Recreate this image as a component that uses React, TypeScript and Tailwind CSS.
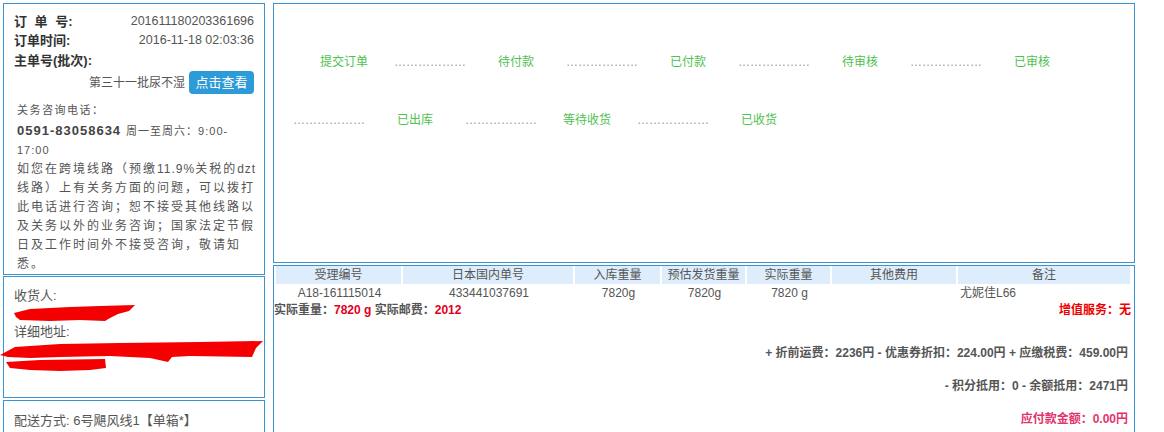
import React from 'react';

const steps: { label: string; dots?: boolean }[] = [
  { label: '提交订单' },
  { label: '', dots: true },
  { label: '待付款' },
  { label: '', dots: true },
  { label: '已付款' },
  { label: '', dots: true },
  { label: '待审核' },
  { label: '', dots: true },
  { label: '已审核' },
  { label: '', dots: true },
  { label: '已出库' },
  { label: '', dots: true },
  { label: '等待收货' },
  { label: '', dots: true },
  { label: '已收货' },
];

const cols = [
  { title: '受理编号', w: 'w-[127px]', value: 'A18-161115014', align: 'text-center' },
  { title: '日本国内单号', w: 'w-[172px]', value: '433441037691', align: 'text-center' },
  { title: '入库重量', w: 'w-[87px]', value: '7820g', align: 'text-center' },
  { title: '预估发货重量', w: 'w-[85px]', value: '7820g', align: 'text-center' },
  { title: '实际重量', w: 'w-[85px]', value: '7820 g', align: 'text-center' },
  { title: '其他费用', w: 'w-[126px]', value: '', align: 'text-center' },
  { title: '备注', w: 'w-[172px]', value: '尤妮佳L66', align: 'text-left pl-[2px]' },
];

const Box: React.FC<{ className?: string; children?: React.ReactNode }> = ({ className = '', children }) => (
  <div className={`border border-[#3a94d4] bg-white ${className}`}>{children}</div>
);

export default function App() {
  return (
    <div className="relative h-[432px] w-[1164px] overflow-hidden bg-white font-['Liberation_Sans','Noto_Sans_CJK_SC',sans-serif] text-[#555]">
      <div className="flex gap-[8px] p-[3px]">
        {/* left column */}
        <div className="flex w-[262px] shrink-0 flex-col">
          <Box className="h-[272px] px-[10px] pt-[8px]">
            <div className="flex items-center justify-between leading-[19px]">
              <span className="text-[13px] font-bold text-[#333] [word-spacing:4px]">订 单 号:</span>
              <span className="text-[12.5px]">201611180203361696</span>
            </div>
            <div className="flex items-center justify-between leading-[19px]">
              <span className="text-[13px] font-bold text-[#333]">订单时间:</span>
              <span className="text-[12.5px]">2016-11-18 02:03:36</span>
            </div>
            <div className="leading-[19px]">
              <span className="text-[13px] font-bold text-[#333]">主单号(批次):</span>
            </div>
            <div className="mt-[1px] flex h-[23px] items-center justify-end">
              <span className="mr-[4px] text-[12px]">第三十一批尿不湿</span>
              <button className="h-[23px] w-[65px] rounded-[4px] bg-[#2d9bd8] text-[13px] text-white">点击查看</button>
            </div>
            <div className="mt-[7px] whitespace-nowrap pl-[3px] leading-[19px] text-[#555]">
              <div className="text-[11px] tracking-[1.5px]">关务咨询电话：</div>
              <div>
                <span className="text-[13px] font-bold tracking-[1px] text-[#444]">0591-83058634</span>
                <span className="ml-[5px] text-[11px] tracking-[1px]">周一至周六：9:00-</span>
              </div>
              <div className="text-[11px] tracking-[1px]">17:00</div>
              <div className="text-[12px] tracking-[2px]">
                如您在跨境线路（预缴<span className="tracking-[1px]">11.9%</span>关税的<span className="tracking-[1px]">dzt</span>
                <br />
                线路）上有关务方面的问题，可以拨打
                <br />
                此电话进行咨询；恕不接受其他线路以
                <br />
                及关务以外的业务咨询；国家法定节假
                <br />
                日及工作时间外不接受咨询，敬请知
                <br />
                悉。
              </div>
            </div>
          </Box>

          <Box className="mt-[1px] h-[122px] px-[10px] pt-[10px] text-[13px] leading-[18px]">
            <div>收货人:</div>
            <div className="h-[18px]" />
            <div>详细地址:</div>
            <div className="h-[36px]" />
          </Box>

          <Box className="mt-[2px] h-[100px] px-[10px] pt-[11px] text-[13px] leading-[18px]">
            配送方式: 6号飓风线1【单箱*】
          </Box>
        </div>

        {/* right column */}
        <div className="flex w-[862px] shrink-0 flex-col">
          <Box className="h-[260px]">
            <div className="flex flex-wrap content-start pl-[12px] pt-[29px]">
              {steps.map((s, i) => (
                <div
                  key={i}
                  className={`flex h-[58px] w-[86px] items-center justify-center ${i === 0 ? 'ml-[15px]' : ''}`}
                >
                  {s.dots ? (
                    <span className="text-[12px] text-[#999]">………………</span>
                  ) : (
                    <span className="text-[12px] text-[#4ec24e]">{s.label}</span>
                  )}
                </div>
              ))}
            </div>
          </Box>

          <Box className="mt-[2px] h-[200px] text-[12px]">
            <div className="ml-[2px] mt-[0px] flex h-[18px]">
              {cols.map((c, i) => (
                <div
                  key={c.title}
                  className={`${c.w} flex items-center justify-center bg-[#deedfb] ${i < cols.length - 1 ? 'border-r-[2px] border-white' : ''}`}
                >
                  {c.title}
                </div>
              ))}
            </div>
            <div className="ml-[2px] flex h-[17px] items-center">
              {cols.map((c) => (
                <div key={c.title} className={`${c.w} ${c.align}`}>
                  {c.value}
                </div>
              ))}
            </div>
            <div className="flex h-[18px] items-center justify-between pr-[3px] font-bold">
              <span>
                实际重量：<span className="text-[#e0001b]">7820 g</span> 实际邮费：<span className="text-[#e0001b]">2012</span>
              </span>
              <span className="text-[#ee0000]">增值服务：无</span>
            </div>
            <div className="mt-[18px] pr-[6px] text-right font-bold leading-[33px]">
              <div>+ 折前运费：2236円 - 优惠券折扣：224.00円 + 应缴税费：459.00円</div>
              <div>- 积分抵用：0 - 余额抵用：2471円</div>
              <div className="text-[#e2336b]">应付款金额：0.00円</div>
            </div>
          </Box>
        </div>
      </div>

      {/* redaction marks over the address */}
      <svg className="pointer-events-none absolute left-0 top-0" width="270" height="432" viewBox="0 0 270 432">
        <polygon
          fill="#f50000"
          points="14,313 30,309 70,307 100,306 135,305 129,311 118,314 110,318 105,321 80,320 50,321 20,320 16,317"
        />
        <polygon
          fill="#f50000"
          points="0,355 15,347 60,344 120,343 200,342 263,341 256,348 252,357 190,356 172,357 168,362 150,358 110,356 60,357 30,358 8,357"
        />
        <polygon fill="#f50000" points="6,362 40,360 105,359 106,368 90,370 60,371 30,370 10,368" />
      </svg>
    </div>
  );
}
